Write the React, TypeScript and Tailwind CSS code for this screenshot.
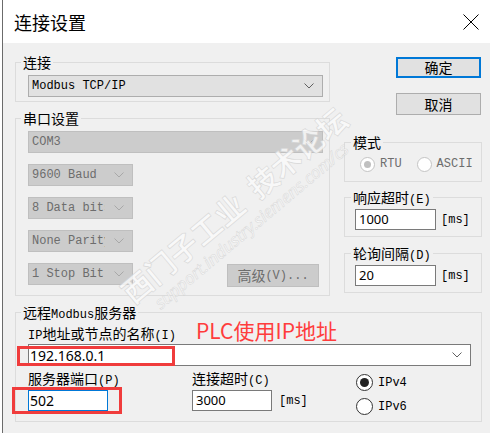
import React from 'react';

function Chevron({ color }: { color: string }) {
  return (
    <svg width="10" height="6" viewBox="0 0 10 6" className="shrink-0">
      <polyline points="0.5,0.5 5,5 9.5,0.5" fill="none" stroke={color} strokeWidth="1" />
    </svg>
  );
}

function Group({
  label,
  className,
  right,
  children,
}: {
  label: React.ReactNode;
  className?: string;
  right?: boolean;
  children: React.ReactNode;
}) {
  return (
    <fieldset className={`m-0 min-w-0 border border-[#dcdcdc] p-0 ${className ?? ''}`}>
      <legend
        className={`${right ? 'ml-[6px]' : 'ml-[5px]'} h-[16px] px-[2px] font-['Noto_Sans_CJK_SC',sans-serif] text-[14px] leading-[16px] text-black`}
      >
        {label}
      </legend>
      {children}
    </fieldset>
  );
}

function M({ children }: { children: React.ReactNode }) {
  return <span className="font-['Liberation_Mono',monospace] text-[12px]">{children}</span>;
}

function Combo({ text, disabled, className }: { text: string; disabled?: boolean; className?: string }) {
  return (
    <div
      className={`flex h-[22px] items-center justify-between pl-[3px] pr-[8px] font-['Liberation_Mono',monospace] text-[12px] ${
        disabled ? 'border border-[#bfbfbf] bg-[#cccccc] text-[#6d6d6d]' : 'border border-[#adadad] bg-[#e1e1e1] text-black'
      } ${className ?? ''}`}
    >
      <span className="overflow-hidden whitespace-nowrap">{text}</span>
      <Chevron color={disabled ? '#a8a8a8' : '#606060'} />
    </div>
  );
}

function SmallCombo({ text }: { text: string }) {
  return (
    <div className="flex h-[22px] w-[105px] items-center justify-between border border-[#bfbfbf] bg-[#cccccc] pl-[3px] pr-[8px] font-['Liberation_Mono',monospace] text-[12px] text-[#6d6d6d]">
      <span className="w-[73px] overflow-hidden whitespace-nowrap">{text}</span>
      <Chevron color="#a8a8a8" />
    </div>
  );
}

function Radio({ checked, disabled, label }: { checked?: boolean; disabled?: boolean; label: string }) {
  return (
    <div className="flex items-center">
      {disabled ? (
        <div className="flex h-[15px] w-[15px] items-center justify-center rounded-full border border-[#c4c4c4] bg-white">
          {checked && <div className="h-[7px] w-[7px] rounded-full bg-[#c0c0c0]" />}
        </div>
      ) : (
        <div className="flex h-[17px] w-[17px] items-center justify-center rounded-full border border-[#333333] bg-white">
          {checked && <div className="h-[9px] w-[9px] rounded-full bg-[#222222]" />}
        </div>
      )}
      <span
        className={`ml-[5px] font-['Liberation_Mono',monospace] text-[12px] leading-[16px] ${
          disabled ? 'text-[#6d6d6d]' : 'text-black'
        }`}
      >
        {label}
      </span>
    </div>
  );
}

function MsInput({ value }: { value: string }) {
  return (
    <div className="flex items-center">
      <div className="flex h-[21px] w-[81px] items-center border border-[#7a7a7a] bg-white pl-[3px] font-['Noto_Sans',sans-serif] text-[13px] text-black">
        {value}
      </div>
      <span className="ml-[5px] font-['Liberation_Mono',monospace] text-[12px] text-black">[ms]</span>
    </div>
  );
}

export default function App() {
  return (
    <div className="relative h-[433px] w-[490px] overflow-hidden bg-white text-black">
      <div className="ml-[2px] flex h-full flex-col border-l border-[#6b6b6b]">
        {/* Title bar */}
        <div className="flex h-[43px] shrink-0 items-center justify-between bg-white pl-[11px] pr-[11px]">
          <span className="font-['Noto_Sans_CJK_SC',sans-serif] text-[18px] leading-none text-black">连接设置</span>
          <svg width="16" height="16" viewBox="0 0 16 16">
            <path d="M0.5 0.5 L15.5 15.5 M15.5 0.5 L0.5 15.5" stroke="#000" strokeWidth="1" fill="none" />
          </svg>
        </div>

        {/* Body */}
        <div className="flex-1 bg-[#f0f0f0] pl-[12px] pt-[11px]">
          <div className="flex items-start">
            {/* Left column */}
            <div className="flex w-[315px] flex-col">
              <Group label="连接">
                <div className="pb-[4px] pl-[12px] pr-[6px] pt-[5px]">
                  <Combo text="Modbus TCP/IP" />
                </div>
              </Group>
              <Group label="串口设置" className="mt-[8px]">
                <div className="flex flex-col gap-[11px] pb-[8px] pl-[12px] pr-[6px] pt-[5px]">
                  <Combo text="COM3" disabled />
                  <SmallCombo text="9600 Baud" />
                  <SmallCombo text="8 Data bits" />
                  <SmallCombo text="None Parity" />
                  <div className="flex items-start justify-between pr-[4px]">
                    <SmallCombo text="1 Stop Bit" />
                    <div className="mt-[1px] flex h-[23px] w-[92px] items-center justify-center border border-[#bfbfbf] bg-[#cccccc] text-[#6d6d6d]">
                      <span className="font-['Noto_Sans_CJK_SC',sans-serif] text-[14px]">高级</span>
                      <M>(V)...</M>
                    </div>
                  </div>
                </div>
              </Group>
            </div>

            {/* Right column */}
            <div className="ml-[14px] flex w-[138px] flex-col pt-[3px]">
              <div className="ml-[52px] flex h-[21px] w-[85px] items-center justify-center border-2 border-[#0078d7] bg-[#e1e1e1] font-['Noto_Sans_CJK_SC',sans-serif] text-[14px] text-black">
                确定
              </div>
              <div className="ml-[52px] mt-[15px] flex h-[22px] w-[85px] items-center justify-center border border-[#adadad] bg-[#e1e1e1] font-['Noto_Sans_CJK_SC',sans-serif] text-[14px] text-black">
                取消
              </div>
              <Group label="模式" right className="mt-[19px]">
                <div className="mt-[6px] flex items-center pb-[9px] pl-[15px]">
                  <Radio disabled checked label="RTU" />
                  <div className="ml-[15px]">
                    <Radio disabled label="ASCII" />
                  </div>
                </div>
              </Group>
              <Group
                label={
                  <>
                    响应超时<M>(E)</M>
                  </>
                }
                right
                className="mt-[7px]"
              >
                <div className="mt-[4px] pb-[6px] pl-[10px]">
                  <MsInput value="1000" />
                </div>
              </Group>
              <Group
                label={
                  <>
                    轮询间隔<M>(D)</M>
                  </>
                }
                right
                className="mt-[8px]"
              >
                <div className="mt-[4px] pb-[6px] pl-[10px]">
                  <MsInput value="20" />
                </div>
              </Group>
            </div>
          </div>

          {/* Remote server group */}
          <Group
            label={
              <>
                远程<M>Modbus</M>服务器
              </>
            }
            className="mt-[8px] w-[467px]"
          >
            <div className="pb-[6px] pl-[12px] pr-[10px]">
              <div className="mt-[5px] h-[16px] font-['Noto_Sans_CJK_SC',sans-serif] text-[14px] leading-[16px] text-black">
                <M>IP</M>地址或节点的名称<M>(I)</M>
              </div>
              <div className="mt-[3px] flex h-[22px] items-center justify-between border border-[#7a7a7a] bg-white pl-[1px] pr-[8px] font-['Noto_Sans',sans-serif] text-[14px] text-black">
                <span>192.168.0.1</span>
                <Chevron color="#606060" />
              </div>
              <div className="mt-[4px] flex items-start">
                <div className="flex w-[80px] flex-col">
                  <div className="h-[16px] whitespace-nowrap font-['Noto_Sans_CJK_SC',sans-serif] text-[14px] leading-[16px] text-black">
                    服务器端口<M>(P)</M>
                  </div>
                  <div className="mt-[4px] flex h-[21px] w-[80px] items-center border border-[#0078d7] bg-white pl-[1px] font-['Noto_Sans',sans-serif] text-[14px] text-black">
                    502
                  </div>
                </div>
                <div className="ml-[84px] flex w-[164px] flex-col">
                  <div className="h-[16px] whitespace-nowrap font-['Noto_Sans_CJK_SC',sans-serif] text-[14px] leading-[16px] text-black">
                    连接超时<M>(C)</M>
                  </div>
                  <div className="mt-[4px] flex items-center">
                    <div className="flex h-[21px] w-[80px] items-center border border-[#7a7a7a] bg-white pl-[3px] font-['Noto_Sans',sans-serif] text-[13px] text-black">
                      3000
                    </div>
                    <span className="ml-[7px] font-['Liberation_Mono',monospace] text-[12px] text-black">[ms]</span>
                  </div>
                </div>
                <div className="mt-[4px] flex flex-col gap-[7px]">
                  <Radio checked label="IPv4" />
                  <Radio label="IPv6" />
                </div>
              </div>
            </div>
          </Group>
        </div>
      </div>

      {/* Watermark */}
      <div className="pointer-events-none absolute left-[240px] top-[212px] flex -translate-x-1/2 -translate-y-1/2 -rotate-[40deg] flex-col items-center whitespace-nowrap opacity-80">
        <div className="font-['Noto_Sans_CJK_SC',sans-serif] text-[30px] font-bold leading-[36px] text-[#fbfbfb] [-webkit-text-stroke:0.6px_#d2d2d2]">
          西门子工业&nbsp;&nbsp;技术论坛
        </div>
        <div className="font-['Noto_Sans',sans-serif] text-[17px] italic leading-[20px] text-[#fbfbfb] [-webkit-text-stroke:0.5px_#d2d2d2]">
          support.industry.siemens.com/cs
        </div>
      </div>

      {/* Red annotations */}
      <div className="absolute left-[196px] top-[318px] font-['Noto_Sans_CJK_SC',sans-serif] text-[21px] leading-[24px] text-[#ff3c3c]">
        PLC使用IP地址
      </div>
      <div className="absolute left-[17px] top-[346px] h-[20px] w-[158px] border-[3px] border-[#f03c3c]" />
      <div className="absolute left-[12px] top-[387px] h-[27px] w-[110px] border-[3px] border-[#f03c3c]" />
    </div>
  );
}
